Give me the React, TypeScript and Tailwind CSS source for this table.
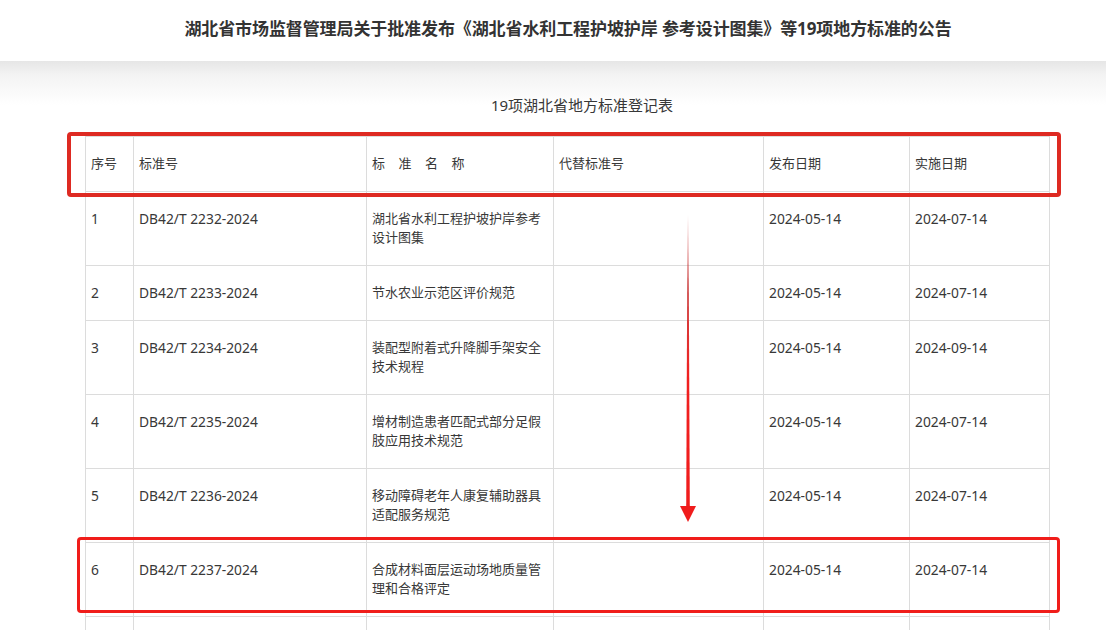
const rows = [
  { no: "1", code: "DB42/T 2232-2024", name: "湖北省水利工程护坡护岸参考设计图集", pub: "2024-05-14", eff: "2024-07-14" },
  { no: "2", code: "DB42/T 2233-2024", name: "节水农业示范区评价规范", pub: "2024-05-14", eff: "2024-07-14" },
  { no: "3", code: "DB42/T 2234-2024", name: "装配型附着式升降脚手架安全技术规程", pub: "2024-05-14", eff: "2024-09-14" },
  { no: "4", code: "DB42/T 2235-2024", name: "增材制造患者匹配式部分足假肢应用技术规范", pub: "2024-05-14", eff: "2024-07-14" },
  { no: "5", code: "DB42/T 2236-2024", name: "移动障碍老年人康复辅助器具适配服务规范", pub: "2024-05-14", eff: "2024-07-14" },
  { no: "6", code: "DB42/T 2237-2024", name: "合成材料面层运动场地质量管理和合格评定", pub: "2024-05-14", eff: "2024-07-14" },
];

const cell = "border border-[#dcdcdc] px-[5px] pt-[17px] pb-[18px] align-top text-left font-normal";

export default function App() {
  return (
    <div
      className="relative min-h-screen w-[1106px] bg-white text-[#383838] overflow-hidden"
      style={{ fontFamily: '"Noto Sans", "Noto Sans CJK SC", sans-serif' }}
    >
      {/* 标题栏 */}
      <header className="h-[61px] flex items-center justify-center pl-[30px] pb-[4px] bg-white">
        <h1 className="text-[17px] font-bold tracking-[-0.1px] text-[#333]">
          湖北省市场监督管理局关于批准发布《湖北省水利工程护坡护岸 参考设计图集》等19项地方标准的公告
        </h1>
      </header>

      <main className="bg-[linear-gradient(to_bottom,#e6e6e6,#f3f3f3_14px,#ffffff_44px)] pt-[32px]">
        <div className="ml-[85px] w-[964px]">
          <p className="pl-[30px] text-center text-[15px] leading-[24px] mb-[19px]">19项湖北省地方标准登记表</p>

          <table className="table-fixed border-collapse w-[964px] text-[13px] leading-[19px]">
            <colgroup>
              <col className="w-[48px]" />
              <col className="w-[233px]" />
              <col className="w-[187px]" />
              <col className="w-[210px]" />
              <col className="w-[146px]" />
              <col className="w-[140px]" />
            </colgroup>
            <thead>
              <tr>
                <th className={cell}>序号</th>
                <th className={cell}>标准号</th>
                <th className={cell}>
                  <span className="tracking-[13.5px]">标准名称</span>
                </th>
                <th className={cell}>代替标准号</th>
                <th className={cell}>发布日期</th>
                <th className={cell}>实施日期</th>
              </tr>
            </thead>
            <tbody>
              {rows.map((r) => (
                <tr key={r.no}>
                  <td className={`${cell} text-[13.8px]`}>{r.no}</td>
                  <td className={`${cell} text-[13.8px]`}>{r.code}</td>
                  <td className={cell}>{r.name}</td>
                  <td className={cell}></td>
                  <td className={`${cell} text-[13.8px]`}>{r.pub}</td>
                  <td className={`${cell} text-[13.8px]`}>{r.eff}</td>
                </tr>
              ))}
              <tr>
                <td className={`${cell} h-[55px]`}></td>
                <td className={cell}></td>
                <td className={cell}></td>
                <td className={cell}></td>
                <td className={cell}></td>
                <td className={cell}></td>
              </tr>
            </tbody>
          </table>
        </div>
      </main>

      {/* 标注：红框与箭头 */}
      <div className="absolute left-[67px] top-[132px] w-[994px] h-[65px] border-[4px] border-[#de2a22] rounded-[4px] pointer-events-none" />
      <div className="absolute left-[77px] top-[537px] w-[983px] h-[76px] border-[3.5px] border-[#f01d1a] rounded-[4px] pointer-events-none" />
      <svg className="absolute left-[678px] top-[212px] pointer-events-none" width="20" height="312" viewBox="0 0 20 312">
        <defs>
          <linearGradient id="arrowFade" x1="0" y1="0" x2="0" y2="1">
            <stop offset="0" stopColor="#d04040" stopOpacity="0" />
            <stop offset="0.25" stopColor="#c83232" stopOpacity="0.9" />
            <stop offset="0.55" stopColor="#f02020" />
            <stop offset="1" stopColor="#f01c1c" />
          </linearGradient>
        </defs>
        <polygon points="9.5,3 10.5,3 11.8,296 8.2,296" fill="url(#arrowFade)" />
        <polygon points="2,294 18,294 10,310" fill="#f01c1c" />
      </svg>
    </div>
  );
}
